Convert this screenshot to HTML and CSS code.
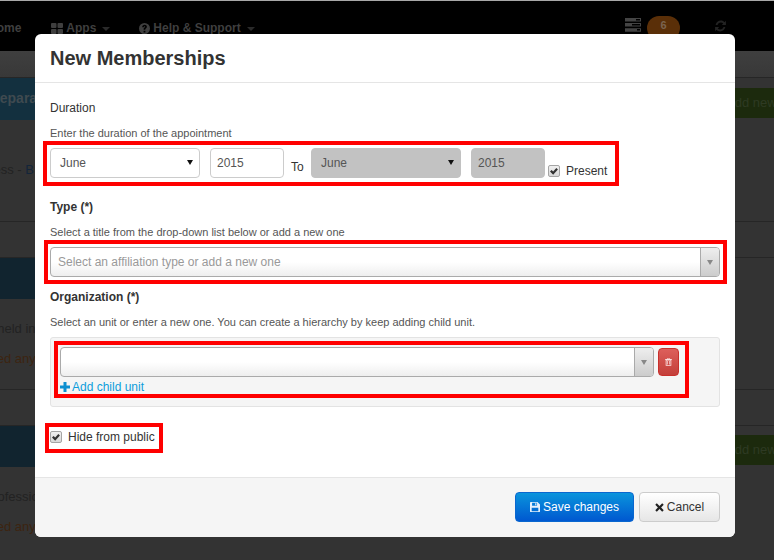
FILE: index.html
```html
<!DOCTYPE html>
<html lang="en">
<head>
<meta charset="utf-8">
<title>New Memberships</title>
<link rel="stylesheet" href="styles.css">
</head>
<body>
<div class="page">
  <header class="navbar">
    <span class="nav-home">Home</span>
    <span class="nav-item nav-apps">
      <svg class="nav-icon" viewBox="0 0 12 11"><path d="M0 1q0-1 1-1h3.500q1 0 1 1v3q0 1-1 1H1q-1 0-1-1zM6.500 1q0-1 1-1H11q1 0 1 1v3q0 1-1 1H7.500q-1 0-1-1zM0 7q0-1 1-1h3.500q1 0 1 1v3q0 1-1 1H1q-1 0-1-1zM6.500 7q0-1 1-1H11q1 0 1 1v3q0 1-1 1H7.500q-1 0-1-1z"/></svg>
      Apps<i class="caret"></i>
    </span>
    <span class="nav-item nav-help">
      <svg class="nav-icon nav-icon-help" viewBox="0 0 24 24"><path fill-rule="evenodd" d="M12 0a12 12 0 1 0 0 24 12 12 0 0 0 0-24zM10 17h4v3.500h-4zM7 9c0-3 2.200-5 5.200-5 3 0 5 1.900 5 4.400 0 2-1.200 3-2.300 3.800-1 .7-1.100 1-1.100 2.300h-3.700c0-2.500.6-3.500 2-4.500.9-.7 1.400-1 1.400-1.700 0-.7-.6-1.200-1.400-1.200-.9 0-1.500.6-1.600 1.900z"/></svg>
      Help &amp; Support<i class="caret"></i>
    </span>
    <span class="nav-right">
      <svg class="nav-tasks" viewBox="0 0 16 14"><path fill-rule="evenodd" d="M0 0h16v3.500H0zM0 5h16v3.500H0zM0 10.200h16v3.500H0zM11 1v1.500h4V1zM7 6v1.500h8V6zM12 11v1.500h3V11z"/></svg>
      <span class="nav-badge">6</span>
      <svg class="nav-refresh" viewBox="0 0 24 24"><path d="M3 10C4 5 8 2 12.500 2c3 0 5.300 1.200 7 3L22 2.500V10h-7.500l2.500-2.500C15.800 6.300 14.300 5.600 12.500 5.600c-3 0-5.200 1.900-6 4.400zM21 14c-1 5-5 8-9.500 8-3 0-5.300-1.200-7-3L2 21.500V14h7.500L7 16.500c1.200 1.200 2.700 1.900 4.500 1.900 3 0 5.200-1.900 6-4.400z"/></svg>
    </span>
  </header>
  <div class="subbar"></div>
  <section class="panel panel-first">
    <div class="panel-head"><span class="panel-title">Preparation</span><span class="panel-add">Add new</span></div>
    <p class="row row-one">Business - <span class="row-link">B</span></p>
  </section>
  <div class="gap-row"></div>
  <section class="panel">
    <div class="panel-head panel-head-plain"></div>
    <p class="row row-degree">Degree held in</p>
    <p class="row row-warn">You have not entered any</p>
  </section>
  <div class="gap-row"></div>
  <section class="panel">
    <div class="panel-head panel-head-plain"><span class="panel-add">Add new</span></div>
    <p class="row row-prof">Your professional</p>
    <p class="row row-warn">You have not entered any</p>
  </section>
</div>

<div class="modal">
  <h2 class="modal-title">New Memberships</h2>
  <div class="modal-body">
    <div class="label label-plain">Duration</div>
    <p class="help help-first">Enter the duration of the appointment</p>
    <div class="date-row">
      <div class="select select-month">June<i class="select-arrow"></i></div>
      <div class="input">2015</div>
      <span class="to">To</span>
      <div class="select select-month is-disabled">June<i class="select-arrow"></i></div>
      <div class="input is-disabled">2015</div>
      <label class="check check-present"><span class="checkbox"><svg viewBox="0 0 12 12"><path d="M1.200 6.600l1.900-1.900 1.900 1.900 3.800-4.200 1.900 1.800-5.700 6.200z"/></svg></span>Present</label>
    </div>
    <div class="label label-bold label-type">Type (*)</div>
    <p class="help help-type">Select a title from the drop-down list below or add a new one</p>
    <div class="combo">
      <span class="combo-text">Select an affiliation type or add a new one</span>
      <span class="combo-btn"><i class="combo-arrow"></i></span>
    </div>
    <div class="label label-bold label-org">Organization (*)</div>
    <p class="help help-org">Select an unit or enter a new one. You can create a hierarchy by keep adding child unit.</p>
    <div class="well">
      <div class="well-row">
        <div class="combo combo-unit">
          <span class="combo-text"></span>
          <span class="combo-btn"><i class="combo-arrow"></i></span>
        </div>
        <button class="btn-delete" type="button" aria-label="Delete">
          <svg viewBox="0 0 10 11"><path fill-rule="evenodd" d="M3.200 0h3.600l.5 1.200H10v1H9V11H1V2.200H0v-1h2.700zM3.900.8l-.2.4h2.600l-.2-.4zM2.200 3.200v6.700h5.600V3.200zM3.300 4h1v5h-1zM5.700 4h1v5h-1z"/></svg>
        </button>
      </div>
      <a class="add-child" href="#"><svg viewBox="0 0 10 10"><path d="M3.500 0h3v3.500H10v3H6.500V10h-3V6.500H0v-3h3.500z"/></svg>Add child unit</a>
    </div>
    <label class="check check-hide"><span class="checkbox"><svg viewBox="0 0 12 12"><path d="M1.200 6.600l1.900-1.900 1.900 1.900 3.800-4.200 1.900 1.800-5.700 6.200z"/></svg></span>Hide from public</label>
  </div>
  <div class="modal-footer">
    <button class="btn btn-primary" type="button"><svg viewBox="0 0 12 12"><path fill-rule="evenodd" d="M0 1q0-1 1-1h8l3 3v8q0 1-1 1H1q-1 0-1-1zM2.500 1v3.500h6V1zM6.200 1.500h1.500v2.500H6.200zM2 7v4h8V7z"/></svg>Save changes</button>
    <button class="btn btn-default" type="button"><svg viewBox="0 0 10 10"><path d="M2 .4L5 3.300 8 .4 9.700 2 6.800 5l2.900 3L8 9.600 5 6.700 2 9.600.300 8l2.900-3L.3 2z"/></svg>Cancel</button>
  </div>
  <span class="mark mark-date"></span>
  <span class="mark mark-type"></span>
  <span class="mark mark-org"></span>
  <span class="mark mark-hide"></span>
</div>
</body>
</html>
```

FILE: styles.css
```css
* { box-sizing: border-box; }
html, body { margin: 0; padding: 0; height: 100%; overflow: hidden; }
body {
  position: relative;
  width: 774px;
  height: 560px;
  background: #333;
  font-family: "Liberation Sans", Arial, sans-serif;
  font-size: 12px;
  color: #333;
}

/* Dimmed page behind the dialog */
.page { height: 560px; overflow: hidden; background: #333; color: #1f1f1f; }
.navbar {
  display: flex;
  align-items: center;
  height: 51px;
  padding-top: 4px;
  background: #000;
  border-top: 1px solid #a8a8a8;
  font-size: 12px;
  font-weight: bold;
  color: #3f3f3f;
  white-space: nowrap;
}
.nav-home { margin-left: -12px; }
.nav-item { display: inline-flex; align-items: center; }
.nav-apps { margin-left: 30px; }
.nav-help { margin-left: 29px; }
.nav-icon { width: 12px; height: 11px; margin-right: 3px; fill: #3f3f3f; }
.nav-icon-help { width: 11px; height: 11px; }
.caret {
  width: 0;
  height: 0;
  margin-left: 6px;
  margin-top: 2px;
  border-left: 4px solid transparent;
  border-right: 4px solid transparent;
  border-top: 4px solid #2a2a2a;
}
.nav-right { display: flex; align-items: center; margin-left: auto; padding-right: 47px; }
.nav-tasks { width: 16px; height: 14px; margin-bottom: 6px; fill: #444; }
.nav-badge {
  width: 33px;
  height: 24px;
  margin-left: 6px;
  border-radius: 12px;
  background: #5a2f08;
  color: #7a6450;
  font-size: 11px;
  line-height: 18px;
  text-align: center;
}
.nav-refresh { width: 13px; height: 14px; margin-left: 34px; margin-bottom: 4px; fill: #222; }
.subbar { height: 27px; background: linear-gradient(#3f3f3f, #383838); border-bottom: 1px solid #262626; }
.panel { height: 132px; background: #333; }
.panel-first { height: 143px; }
.panel-head {
  display: flex;
  align-items: flex-start;
  justify-content: space-between;
  height: 42px;
  background: linear-gradient(90deg, #13303f 0, #13303f 120px, #333 120px);
  font-size: 14px;
  font-weight: bold;
  color: #3f4a50;
}
.panel-head-plain {
  justify-content: flex-end;
  border-top: 1px solid #262626;
  background: linear-gradient(90deg, #11242f 0, #11242f 120px, #333 120px);
}
.panel-title { width: 120px; margin-left: -15px; padding-top: 12px; line-height: 16px; white-space: nowrap; }
.panel-add {
  width: 60px;
  height: 30px;
  margin-top: 10px;
  padding-left: 12px;
  background: #1c2a0d;
  color: #2e3a23;
  font-size: 13px;
  font-weight: normal;
  line-height: 30px;
  white-space: nowrap;
  overflow: hidden;
}
.panel-head-plain .panel-add { margin-top: 9px; }
.row { margin: 0; white-space: nowrap; font-size: 13px; color: #222; line-height: 14px; }
.row-one { padding-top: 43px; margin-left: -39px; }
.row-link { color: #13253a; }
.row-degree { margin-left: -49px; padding-top: 23px; }
.row-prof { margin-left: -44px; padding-top: 23px; }
.row-warn { margin-left: -112px; padding-top: 16px; color: #3d2410; }
.gap-row { height: 36px; border-top: 1px solid #262626; }

/* Dialog */
.modal {
  position: absolute;
  left: 35px;
  top: 34px;
  display: flex;
  flex-direction: column;
  width: 700px;
  height: 503px;
  border-radius: 6px;
  background: #fff;
  overflow: hidden;
}
.modal-title {
  height: 49px;
  margin: 0;
  padding: 13px 15px 0;
  border-bottom: 1px solid #e5e5e5;
  font-size: 20px;
  line-height: 22px;
  font-weight: bold;
  color: #333;
}
.modal-body { flex: 1; padding: 0 15px; }
.label { font-size: 12px; line-height: 14px; color: #333; }
.label-plain { padding-top: 18px; }
.label-bold { font-weight: bold; }
.label-type { margin-top: 22px; }
.label-org { margin-top: 13px; }
.help { margin: 0; font-size: 11px; line-height: 14px; color: #555; white-space: nowrap; }
.help-first { margin-top: 11px; }
.help-type { margin-top: 11px; }
.help-org { margin-top: 11px; }

.date-row { display: flex; margin-top: 8px; height: 30px; }
.select, .input {
  position: relative;
  height: 30px;
  border: 1px solid #ccc;
  border-radius: 4px;
  background: #fff;
  line-height: 28px;
  color: #555;
}
.select-month { width: 150px; padding-left: 9px; }
.select-month + .input { margin-left: 10px; }
.input { width: 74px; padding-left: 6px; }
.is-disabled { background: #c2c2c2; border-color: #c2c2c2; }
.select-arrow {
  position: absolute;
  right: 6px;
  top: 11px;
  width: 0;
  height: 0;
  border-left: 3px solid transparent;
  border-right: 3px solid transparent;
  border-top: 5px solid #111;
}
.to { width: 20px; margin-left: 7px; padding-top: 12px; line-height: 14px; }
.check { display: flex; align-items: center; line-height: 14px; color: #333; white-space: nowrap; }
.check-present { margin-left: 3px; padding-top: 15px; height: 30px; }
.checkbox {
  display: block;
  flex: none;
  width: 12px;
  height: 12px;
  margin-right: 6px;
  border: 1px solid #a5a5a5;
  border-radius: 2px;
  background: linear-gradient(#f0f0f0, #d8d8d8);
}
.checkbox svg { display: block; width: 10px; height: 10px; fill: #333; }

.combo {
  display: flex;
  height: 30px;
  margin-top: 8px;
  border: 1px solid #aaa;
  border-radius: 4px;
  background: linear-gradient(#fff 0, #fff 50%, #eee 100%);
}
.combo-text { flex: 1; padding-left: 7px; line-height: 28px; color: #999; white-space: nowrap; }
.combo-btn {
  display: flex;
  justify-content: center;
  width: 19px;
  padding-top: 12px;
  border-left: 1px solid #aaa;
  border-radius: 0 3px 3px 0;
  background: linear-gradient(#eee, #ccc);
}
.combo-arrow {
  width: 0;
  height: 0;
  border-left: 3px solid transparent;
  border-right: 3px solid transparent;
  border-top: 5px solid #888;
}
.well {
  height: 70px;
  margin-top: 8px;
  padding: 9px 9px 0;
  border: 1px solid #e3e3e3;
  border-radius: 3px;
  background: #f5f5f5;
}
.well-row { display: flex; align-items: center; gap: 4px; }
.combo-unit { width: 594px; margin-top: 0; }
.btn-delete {
  display: flex;
  align-items: center;
  justify-content: center;
  width: 21px;
  height: 28px;
  padding: 0;
  border: 1px solid #c9302c;
  border-radius: 4px;
  background: linear-gradient(#dd5f5b, #c33f3a);
}
.btn-delete svg { width: 7px; height: 8px; fill: #fbe3e3; }
.add-child {
  display: flex;
  align-items: center;
  margin-top: 3px;
  color: #0d9ddb;
  line-height: 14px;
  text-decoration: none;
}
.add-child svg { width: 10px; height: 10px; margin-right: 2px; fill: #0d8fd0; }
.check-hide { margin-top: 23px; height: 14px; }

.modal-footer {
  display: flex;
  justify-content: flex-end;
  gap: 5px;
  height: 60px;
  padding: 14px 15px 0;
  border-top: 1px solid #e5e5e5;
  background: #f5f5f5;
}
.btn {
  display: flex;
  align-items: center;
  justify-content: center;
  height: 30px;
  padding: 0;
  border-radius: 4px;
  font-family: "Liberation Sans", Arial, sans-serif;
  font-size: 12px;
}
.btn svg { margin-right: 3px; }
.btn-primary {
  width: 119px;
  border: 1px solid #0a67cf;
  background: linear-gradient(#0a94dc, #0058d0);
  color: #fff;
}
.btn-primary svg { width: 10px; height: 10px; fill: #e8f2fc; }
.btn-default {
  width: 81px;
  border: 1px solid #ccc;
  background: linear-gradient(#fff, #e6e6e6);
  color: #333;
}
.btn-default svg { width: 9px; height: 9px; fill: #222; }

/* Red annotation frames drawn over the dialog */
.mark { position: absolute; border: 4px solid #f00; pointer-events: none; }
.mark-date { left: 8px; top: 107px; width: 576px; height: 45px; }
.mark-type { left: 9px; top: 206px; width: 683px; height: 44px; }
.mark-org { left: 19px; top: 307px; width: 635px; height: 57px; }
.mark-hide { left: 10px; top: 389px; width: 118px; height: 30px; }
```
